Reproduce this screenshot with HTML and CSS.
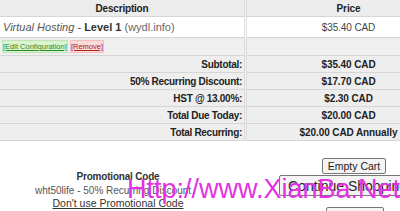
FILE: index.html
```html
<!DOCTYPE html>
<html>
<head>
<meta charset="utf-8">
<link rel="stylesheet" href="styles.css">
</head>
<body>
<div class="page">
  <table class="cart">
    <tr class="head">
      <th class="desc">Description</th>
      <th class="price">Price</th>
    </tr>
    <tr class="product">
      <td class="desc"><em>Virtual Hosting</em> - <b>Level 1</b> <span class="dom">(wydl.info)</span></td>
      <td class="price">$35.40 CAD</td>
    </tr>
    <tr class="links">
      <td class="desc"><a class="edit" href="#">[Edit Configuration]</a> <a class="remove" href="#">[Remove]</a></td>
      <td class="price"></td>
    </tr>
    <tr class="sum">
      <td class="label">Subtotal:</td>
      <td class="price">$35.40 CAD</td>
    </tr>
    <tr class="sum">
      <td class="label">50% Recurring Discount:</td>
      <td class="price">$17.70 CAD</td>
    </tr>
    <tr class="sum">
      <td class="label">HST @ 13.00%:</td>
      <td class="price">$2.30 CAD</td>
    </tr>
    <tr class="sum">
      <td class="label">Total Due Today:</td>
      <td class="price">$20.00 CAD</td>
    </tr>
    <tr class="sum">
      <td class="label">Total Recurring:</td>
      <td class="price">$20.00 CAD Annually</td>
    </tr>
  </table>
  <div class="bottom">
    <div class="promo">
      <div class="promo-title">Promotional Code</div>
      <div class="promo-code">wht50life - 50% Recurring Discount</div>
      <a class="promo-remove" href="#">Don't use Promotional Code</a>
    </div>
    <div class="actions">
      <button class="btn small">Empty Cart</button>
      <button class="btn big">Continue Shopping</button>
      <button class="btn small third">Checkout</button>
    </div>
  </div>
  <div class="watermark">Http://www.XianBa.Net</div>
</div>
</body>
</html>
```
FILE: styles.css
```css
html, body {
  margin: 0;
  padding: 0;
  background: #fff;
}
body {
  width: 400px;
  height: 211px;
  overflow: hidden;
  font-family: "Liberation Sans", Arial, sans-serif;
  font-size: 11px;
  color: #333;
}
.page {
  position: relative;
  width: 400px;
  height: 211px;
  overflow: hidden;
}
.cart {
  width: 450px;
  border-collapse: collapse;
  table-layout: fixed;
}
.cart td, .cart th {
  padding: 0 2px;
  border-bottom: 1px solid #d6d6d6;
  white-space: nowrap;
}
.cart .desc, .cart .label {
  width: 240px;
  border-right: 3px double #dcdcdc;
}
.cart .price {
  text-align: center;
  font-size: 10px;
  letter-spacing: -0.1px;
}
.head th {
  height: 16px;
  background: #ececec;
  font-weight: bold;
  font-size: 10px;
  letter-spacing: -0.2px;
  color: #222;
  text-align: center;
}
.product td {
  height: 20px;
  background: #fff;
  color: #444;
}
.product .desc {
  padding-left: 3px;
}
.product em {
  color: #555;
}
.product b {
  color: #333;
}
.dom {
  color: #666;
}
.links td {
  height: 17px;
  background: #efefef;
  font-size: 7.5px;
}
.edit {
  color: #2a8a2a;
  background: #d8f5d0;
  border: 1px solid #c0e4b8;
  padding: 1px 0;
}
.remove {
  color: #b02020;
  background: #fbdada;
  border: 1px solid #f0c0c0;
  padding: 1px 0;
}
.sum td {
  height: 16px;
  background: #eeeeee;
  font-weight: bold;
  font-size: 10px;
  letter-spacing: -0.3px;
  color: #222;
}
.sum .label {
  text-align: right;
}
.bottom {
  display: flex;
  padding-top: 17px;
}
.promo {
  flex: 0 0 236px;
  display: flex;
  flex-direction: column;
  align-items: center;
  padding-top: 12px;
  line-height: 13.5px;
  font-size: 10px;
  color: #444;
}
.promo-title {
  font-weight: bold;
  letter-spacing: -0.2px;
  color: #333;
}
.promo-code {
  color: #555;
  margin-left: -10px;
}
.promo-remove {
  color: #333;
  font-size: 10.5px;
}
.actions {
  flex: 1;
  min-width: 0;
  display: flex;
  flex-direction: column;
  align-items: flex-start;
}
.btn {
  font-family: "Liberation Sans", Arial, sans-serif;
  background: #f4f4f4;
  border: 1px solid #777;
  border-radius: 2px;
  color: #222;
  padding: 0;
  flex-shrink: 0;
}
.small {
  width: 64px;
  height: 16px;
  font-size: 10.5px;
  margin-left: 86px;
}
.big {
  margin-top: 1px;
  margin-left: 43px;
  height: 21px;
  font-size: 14px;
  padding: 0 8px;
  white-space: nowrap;
}
.third {
  margin-top: 11px;
  margin-left: 90px;
  width: 58px;
  color: #fff;
}
.watermark {
  position: absolute;
  left: 127px;
  top: 176px;
  font-family: "Liberation Sans", Arial, sans-serif;
  font-size: 27px;
  line-height: 26px;
  color: #e232e2;
  white-space: nowrap;
}
```
